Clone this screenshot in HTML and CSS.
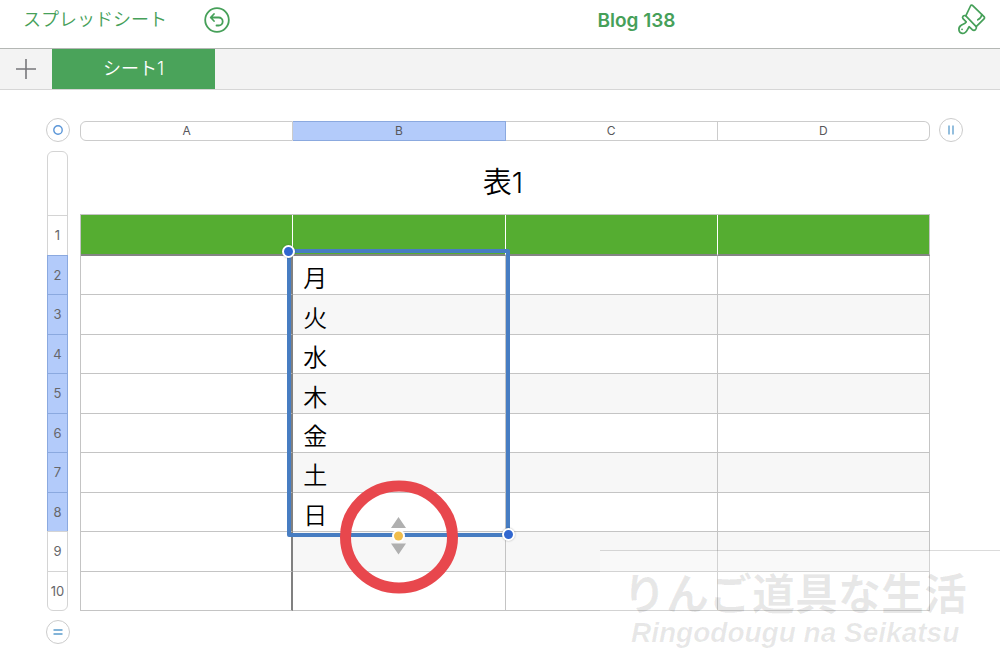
FILE: index.html
```
<!DOCTYPE html>
<html lang="ja">
<head>
    <meta charset="UTF-8">
    <meta name="viewport" content="width=device-width, initial-scale=1.0">
    <title>Blog 138</title>
    <link rel="stylesheet" href="styles.css">
</head>
<body>

    <div class="app">
        <header class="toolbar">
            <div class="toolbar-left">
                <a class="back" href="#">スプレッドシート</a>
                <button class="icon-btn" aria-label="取り消す">
                    <svg width="28" height="28" viewBox="0 0 28 28" fill="none" stroke="#46a059" stroke-width="1.8" stroke-linecap="round" stroke-linejoin="round">
                        <circle cx="14" cy="14" r="11.8"/>
                        <path d="M11 8 7.700 11.500 11 15M7.700 11.500h8a4 4 0 0 1 0 8h-2.200"/>
                    </svg>
                </button>
            </div>
            <h1>Blog 138</h1>
            <div class="toolbar-right">
                <button class="icon-btn" aria-label="フォーマット">
                    <svg width="30" height="32" viewBox="0 0 30 32" fill="none" stroke="#46a059" stroke-width="1.700" stroke-linecap="round" stroke-linejoin="round">
                        <path d="M14.500 2 9.800 11.800 20.200 22.600 28 14.800c.700-.700.700-1.500 0-2.200L17 1.800c-.900-.900-2-.900-2.500.200z"/>
                        <path d="M9.800 11.800c-2-1-4.200 1-2.800 2.900l3.200 3.200c-1.300 1.900-3.600 2.500-5.300 3.600-3.200 2.300-2.400 7.300 1.300 7.900 4 .600 4.800-3.500 6.900-6.700l3.200 3c2.400 1.700 5-.800 3.900-3.100"/>
                        <path d="M25.800 10.500c-.300 2.300-1.600 4.200-4 5.300M6 25.300h.100"/>
                    </svg>
                </button>
            </div>
        </header>

        <nav class="tabs">
            <button class="add-tab" aria-label="シートを追加">
                <svg width="20" height="20" viewBox="0 0 20 20" stroke="#77777b" stroke-width="1.600"><path d="M10 0v20M0 10h20"/></svg>
            </button>
            <button class="tab">シート1</button>
        </nav>

        <main class="sheet">
            <button class="round" aria-label="表を移動">
                <svg width="12" height="12" viewBox="0 0 12 12" fill="none" stroke="#5b96d8" stroke-width="1.400"><circle cx="6" cy="6" r="4.200"/></svg>
            </button>
            <div class="columns">
                <button>A</button>
                <button class="selected">B</button>
                <button>C</button>
                <button>D</button>
            </div>
            <button class="round end" aria-label="列を追加">
                <svg width="12" height="12" viewBox="0 0 12 12" stroke="#5b9ccc" stroke-width="1.300"><path d="M4 1.500v9M8 1.500v9"/></svg>
            </button>

            <div class="rows">
                <div class="rows-space"></div>
                <button>1</button>
                <button class="selected">2</button>
                <button class="selected">3</button>
                <button class="selected">4</button>
                <button class="selected">5</button>
                <button class="selected">6</button>
                <button class="selected">7</button>
                <button class="selected">8</button>
                <button>9</button>
                <button>10</button>
            </div>
            <div class="content">
                <h2 id="tableName">表1</h2>
                <div class="table-wrap">
                    <table aria-labelledby="tableName">
                        <thead>
                            <tr><th></th><th></th><th></th><th></th></tr>
                        </thead>
                        <tbody>
                            <tr><td></td><td>月</td><td></td><td></td></tr>
                            <tr><td></td><td>火</td><td></td><td></td></tr>
                            <tr><td></td><td>水</td><td></td><td></td></tr>
                            <tr><td></td><td>木</td><td></td><td></td></tr>
                            <tr><td></td><td>金</td><td></td><td></td></tr>
                            <tr><td></td><td>土</td><td></td><td></td></tr>
                            <tr><td></td><td>日</td><td></td><td></td></tr>
                            <tr><td></td><td></td><td></td><td></td></tr>
                            <tr><td></td><td></td><td></td><td></td></tr>
                        </tbody>
                    </table>
                    <div class="selection">
                        <span class="handle start"></span>
                        <span class="handle finish"></span>
                        <svg class="fill-mark" width="120" height="116" viewBox="0 0 120 116">
                            <ellipse cx="60" cy="58" rx="53.500" ry="51" fill="none" stroke="#e8474d" stroke-width="11"/>
                            <path d="M59.500 38 67 49H52zM52 64.500h15L59.500 75.500z" fill="#b0b0b0"/>
                            <circle cx="59.500" cy="57" r="6.500" fill="#fff"/>
                            <circle cx="59.500" cy="57" r="4.500" fill="#f0bd4c"/>
                        </svg>
                    </div>
                </div>
            </div>

            <button class="round bottom" aria-label="行を追加">
                <svg width="12" height="12" viewBox="0 0 12 12" stroke="#5b9ccc" stroke-width="1.300"><path d="M1.500 4h9M1.500 8h9"/></svg>
            </button>
        </main>

        <div class="watermark">
            <p class="watermark-ja">りんご道具な生活</p>
            <p class="watermark-en">Ringodougu na Seikatsu</p>
        </div>
    </div>

</body>
</html>
```
FILE: styles.css
```
* {
    box-sizing: border-box;
}
body {
    margin: 0;
    background-color: #fff;
    font-family: Inter, "Noto Sans CJK JP", sans-serif;
}
h1, h2, p {
    margin: 0;
}
button {
    padding: 0;
    border: 0;
    background: none;
    font: inherit;
    color: inherit;
    cursor: pointer;
}
svg {
    display: block;
}
.app {
    position: relative;
    min-height: 100vh;
    overflow: hidden;
}

/* toolbar */
.toolbar {
    display: grid;
    grid-template-columns: 1fr auto 1fr;
    align-items: center;
    height: 49px;
    padding: 0 14px 8px 23px;
    border-bottom: 1px solid #b4b7b4;
    color: #46a059;
}
.toolbar-left {
    display: flex;
    align-items: center;
    gap: 36px;
}
.toolbar-right {
    display: flex;
    justify-content: flex-end;
}
.back {
    color: inherit;
    font-size: 18px;
    font-weight: 350;
    line-height: 28px;
    text-decoration: none;
}
.toolbar h1 {
    padding-left: 264px;
    font-size: 19px;
    font-weight: 600;
}

/* sheet tabs */
.tabs {
    display: flex;
    height: 41px;
    background-color: #f3f3f3;
    border-bottom: 1px solid #d6d6d6;
}
.add-tab {
    display: flex;
    align-items: center;
    justify-content: center;
    width: 52px;
}
.tab {
    width: 163px;
    padding-bottom: 4px;
    background-color: #4aa35a;
    color: #fff;
    font-size: 18px;
    font-weight: 350;
}

/* spreadsheet */
.sheet {
    display: grid;
    grid-template-columns: 34px 1fr 33px;
    row-gap: 9px;
    padding: 28px 37px 20px 46px;
}
.round {
    display: flex;
    align-items: center;
    justify-content: center;
    width: 24px;
    height: 24px;
    border: 1px solid #ccc;
    border-radius: 50%;
    background-color: #fff;
}
.round.end {
    justify-self: end;
}
.round.bottom {
    grid-column: 1;
}
.columns {
    display: flex;
    height: 20px;
    margin-top: 3px;
    color: #58585c;
    font-size: 12px;
}
.columns button {
    flex: 1;
    padding-bottom: 2px;
    border: 1px solid #ccc;
    border-left: 0;
}
.columns button:first-child {
    border-left: 1px solid #ccc;
    border-radius: 6px 0 0 6px;
}
.columns button:last-child {
    border-radius: 0 6px 6px 0;
}
.columns .selected {
    background-color: #b3cbfa;
    border-color: #8ba9df;
}
.rows {
    display: flex;
    flex-direction: column;
    width: 21px;
    margin-left: 1px;
    border: 1px solid #d4d4d4;
    border-radius: 6px;
    color: #66666a;
    font-size: 13px;
}
.rows-space {
    height: 63px;
}
.rows button {
    flex: 1;
    margin: 0 -1px;
    border: 0 solid #d4d4d4;
    border-top-width: 1px;
}
.rows .selected {
    background-color: #b3cbfa;
    border: 1px solid #8ba9df;
    border-bottom: 0;
}
.content h2 {
    height: 63px;
    padding-right: 4px;
    font-size: 29px;
    font-weight: 350;
    line-height: 64px;
    text-align: center;
}
.table-wrap {
    position: relative;
}
table {
    width: 100%;
    height: 397px;
    table-layout: fixed;
    border-collapse: separate;
    border-spacing: 0;
    border: 1px solid #c4c4c4;
    border-width: 1px 0 0 1px;
}
th {
    height: 41px;
    padding: 0;
    background-color: #55ad31;
    border-right: 1px solid #fff;
    border-bottom: 2px solid #848484;
}
th:last-child {
    border-right: 1px solid #c4c4c4;
}
td {
    height: 39px;
    padding: 4px 0 0 10px;
    border-right: 1px solid #c4c4c4;
    border-bottom: 1px solid #c4c4c4;
    font-family: "Noto Sans CJK JP", sans-serif;
    font-size: 24px;
    font-weight: 350;
    line-height: 30px;
}
td:first-child {
    border-right: 2px solid #808080;
}
tr:nth-child(even) td:not(:first-child) {
    background-color: #f7f7f7;
}
.selection {
    position: absolute;
    top: 35px;
    bottom: 74px;
    left: calc(25% - 6px);
    width: calc(25% + 11px);
    border: 4px solid #477dc2;
    border-radius: 2px;
}
.handle {
    position: absolute;
    width: 13px;
    height: 13px;
    border: 2px solid #fff;
    border-radius: 50%;
    background-color: #3167d0;
    box-shadow: 0 0 2px rgba(0,0,0,0.3);
}
.handle.start {
    top: -8px;
    left: -9px;
}
.handle.finish {
    right: -9px;
    bottom: -8px;
}
.fill-mark {
    position: absolute;
    left: calc(50% - 59px);
    bottom: -62px;
}

/* blog name */
.watermark {
    position: absolute;
    right: 0;
    bottom: 0;
    width: 400px;
    height: 115px;
    padding: 12px 0 0 23px;
    border-top: 1px solid rgba(0,0,0,0.14);
    background-color: rgba(255,255,255,0.25);
    color: rgba(0,0,0,0.09);
    font-weight: 700;
    white-space: nowrap;
    pointer-events: none;
}
.watermark-ja {
    font-family: "Noto Sans CJK JP", sans-serif;
    font-size: 43px;
    line-height: 56px;
}
.watermark-en {
    padding-left: 8px;
    font-family: "Liberation Sans", sans-serif;
    font-size: 28px;
    font-style: italic;
    line-height: 28px;
}
```
